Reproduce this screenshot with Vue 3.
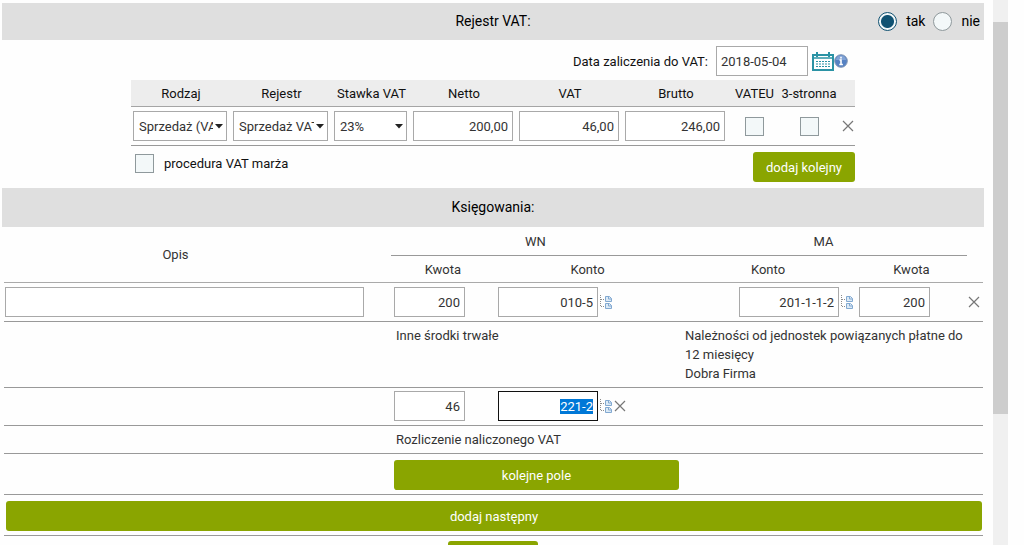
<script setup>
import { onMounted, ref } from 'vue'

const vatRegister = ref('tak')
const vatDate = ref('2018-05-04')
const kind = ref('Sprzedaż (VAT)')
const register = ref('Sprzedaż VAT')
const rate = ref('23%')
const amounts = ref([
  { label: 'Netto', value: '200,00' },
  { label: 'VAT', value: '46,00' },
  { label: 'Brutto', value: '246,00' },
])
const activeAccount = ref(null)

onMounted(() => {
  activeAccount.value.focus()
  activeAccount.value.select()
})
</script>

<template>
  <div class="page">
    <svg class="defs" aria-hidden="true">
      <symbol id="tree" viewBox="0 0 13 16">
        <path d="M1.500 1v12M2 5.500h4M2 12.500h4" fill="none" stroke="#8b8b8b" stroke-dasharray="1 1" />
        <g fill="#dceaf6" stroke="#82a9d1">
          <path d="M6.500 2.500h4l2 2v3h-6z" />
          <path d="M6.500 9.500h4l2 2v3h-6z" />
          <path d="M9.500 2.500v2.500h3M9.500 9.500v2.500h3" fill="none" />
        </g>
      </symbol>
      <symbol id="cross" viewBox="0 0 12 12">
        <path d="M1 1l10 10M11 1L1 11" fill="none" stroke="#777" stroke-width="1.200" />
      </symbol>
    </svg>

    <main class="content">
      <header class="bar bar-vat">
        <h2>Rejestr VAT:</h2>
        <div class="choice">
          <input id="vat-yes" v-model="vatRegister" type="radio" name="vat" value="tak" />
          <label for="vat-yes">tak</label>
          <input id="vat-no" v-model="vatRegister" type="radio" name="vat" value="nie" />
          <label for="vat-no">nie</label>
        </div>
      </header>

      <section class="vat">
        <div class="date-row">
          <label for="vat-date">Data zaliczenia do VAT:</label>
          <input id="vat-date" v-model="vatDate" class="field date" type="text" />
          <button class="icon" type="button" aria-label="Kalendarz">
            <svg width="22" height="20" viewBox="0 0 22 20">
              <rect x="1" y="4" width="20" height="15" fill="#fff" stroke="#2b93a5" stroke-width="2" />
              <path d="M1 7h20" stroke="#2b93a5" stroke-width="1.500" />
              <path d="M5 1v5M17 1v5" stroke="#2b93a5" stroke-width="2" />
              <path d="M4 10.500h14M4 13h14M4 15.500h14" stroke="#2b93a5" stroke-width="1.200" stroke-dasharray="2 1" />
            </svg>
          </button>
          <button class="icon info" type="button" aria-label="Informacja">
            <svg width="14" height="14" viewBox="0 0 14 14">
              <circle cx="7" cy="7" r="6.300" fill="#5682c3" stroke="#8397b5" />
              <path d="M2 6a5 4.500 0 0 1 10 0z" fill="#81a3d6" />
              <path d="M7 2.800v1.800M5.500 6H7v4.200M5.300 10.500h3.600" fill="none" stroke="#fff" stroke-width="1.600" />
            </svg>
          </button>
        </div>

        <table class="vat-table">
          <colgroup>
            <col class="c-kind" /><col class="c-reg" /><col class="c-rate" />
            <col /><col /><col />
            <col class="c-eu" /><col class="c-three" /><col class="c-del" />
          </colgroup>
          <thead>
            <tr>
              <th>Rodzaj</th><th>Rejestr</th><th>Stawka VAT</th>
              <th v-for="a in amounts" :key="a.label">{{ a.label }}</th>
              <th>VATEU</th><th>3-stronna</th><th></th>
            </tr>
          </thead>
          <tbody>
            <tr>
              <td>
                <select v-model="kind" class="field" aria-label="Rodzaj"><option>Sprzedaż (VAT)</option></select>
              </td>
              <td>
                <select v-model="register" class="field" aria-label="Rejestr"><option>Sprzedaż VAT</option></select>
              </td>
              <td>
                <select v-model="rate" class="field" aria-label="Stawka VAT"><option>23%</option></select>
              </td>
              <td v-for="a in amounts" :key="a.label">
                <input v-model="a.value" class="field num" type="text" :aria-label="a.label" />
              </td>
              <td class="mid"><input type="checkbox" aria-label="VATEU" /></td>
              <td class="mid"><input type="checkbox" aria-label="3-stronna" /></td>
              <td class="del">
                <button class="icon" type="button" aria-label="Usuń"><svg width="12" height="12"><use href="#cross" /></svg></button>
              </td>
            </tr>
          </tbody>
        </table>

        <div class="vat-foot">
          <div class="margin-opt">
            <input id="margin" type="checkbox" />
            <label for="margin">procedura VAT marża</label>
          </div>
          <button class="btn add" type="button">dodaj kolejny</button>
        </div>
      </section>

      <header class="bar bar-post">
        <h2>Księgowania:</h2>
      </header>

      <table class="post-table">
        <colgroup>
          <col /><col class="p-amt" /><col class="p-acc" /><col class="p-acc2" /><col class="p-amt2" /><col class="p-del" />
        </colgroup>
        <thead>
          <tr>
            <th rowspan="2" class="desc">Opis</th>
            <th colspan="2" class="group">WN</th>
            <th colspan="2" class="group">MA</th>
            <th rowspan="2"></th>
          </tr>
          <tr>
            <th>Kwota</th><th>Konto</th><th>Konto</th><th>Kwota</th>
          </tr>
        </thead>
        <tbody>
          <tr>
            <td class="desc-cell"><input class="field" type="text" aria-label="Opis" /></td>
            <td><input class="field num amount" type="text" value="200" aria-label="Kwota WN" /></td>
            <td>
              <div class="account">
                <input class="field num" type="text" value="010-5" aria-label="Konto WN" />
                <button class="icon" type="button" aria-label="Plan kont"><svg width="13" height="16"><use href="#tree" /></svg></button>
              </div>
            </td>
            <td>
              <div class="account end">
                <input class="field num" type="text" value="201-1-1-2" aria-label="Konto MA" />
                <button class="icon" type="button" aria-label="Plan kont"><svg width="13" height="16"><use href="#tree" /></svg></button>
              </div>
            </td>
            <td><input class="field num amount" type="text" value="200" aria-label="Kwota MA" /></td>
            <td class="del">
              <button class="icon" type="button" aria-label="Usuń"><svg width="12" height="12"><use href="#cross" /></svg></button>
            </td>
          </tr>
          <tr class="names">
            <td></td>
            <td colspan="2">Inne środki trwałe</td>
            <td colspan="2">Należności od jednostek powiązanych płatne do 12 miesięcy<br />Dobra Firma</td>
            <td></td>
          </tr>
          <tr class="extra">
            <td></td>
            <td><input class="field num amount" type="text" value="46" aria-label="Kwota WN" /></td>
            <td>
              <div class="account">
                <input ref="activeAccount" class="field num" type="text" value="221-2" aria-label="Konto WN" />
                <button class="icon" type="button" aria-label="Plan kont"><svg width="13" height="16"><use href="#tree" /></svg></button>
                <button class="icon remove" type="button" aria-label="Usuń"><svg width="12" height="12"><use href="#cross" /></svg></button>
              </div>
            </td>
            <td colspan="3"></td>
          </tr>
          <tr class="names">
            <td></td>
            <td colspan="2">Rozliczenie naliczonego VAT</td>
            <td colspan="3"></td>
          </tr>
          <tr class="action">
            <td></td>
            <td colspan="2"><button class="btn wide" type="button">kolejne pole</button></td>
            <td colspan="3"></td>
          </tr>
          <tr class="action full">
            <td colspan="6"><button class="btn wide" type="button">dodaj następny</button></td>
          </tr>
        </tbody>
      </table>

      <div class="footer"><button class="btn save" type="button"></button></div>
    </main>

    <div class="scroll" aria-hidden="true"><div class="thumb"></div></div>
  </div>
</template>

<style>
body {
  background: #fefefe;
}
</style>

<style scoped>
.page,
.page * {
  box-sizing: border-box;
}
.page {
  display: flex;
  height: 100vh;
  overflow: hidden;
  padding: 0 16px 0 2px;
  font: 13px/19px Roboto, sans-serif;
  color: #333;
}
.defs {
  position: absolute;
  width: 0;
  height: 0;
}
.content {
  flex: 1;
  min-width: 0;
  padding-top: 3px;
}
.scroll {
  width: 15px;
  margin-left: 9px;
  padding-top: 22px;
  background: #f0f0f0;
}
.thumb {
  height: 75%;
  background: #cdcdcd;
}
.bar {
  display: flex;
  align-items: center;
  justify-content: center;
  background: #dfdfdf;
  color: #000;
}
.bar-vat {
  position: relative;
  height: 37px;
}
.bar-post {
  height: 39px;
}
h2 {
  margin: 0;
  font-size: 14px;
  font-weight: 400;
}
.choice {
  position: absolute;
  right: 4px;
  top: 9px;
  display: flex;
  align-items: center;
  font-size: 14px;
}
.choice label {
  margin-left: 9px;
}
.choice label + input {
  margin-left: 8px;
}
input[type='radio'],
input[type='checkbox'] {
  appearance: none;
  flex: none;
  width: 19px;
  height: 19px;
  margin: 0;
  border: 1px solid #8f999c;
  background: #f3f8f9;
}
input[type='radio'] {
  border-radius: 50%;
}
input[type='radio']:checked {
  border-color: #105272;
  background: radial-gradient(circle, #105272 0 6px, #f3f8f9 7px);
}
input[type='checkbox'] {
  display: block;
}
.vat {
  height: 148px;
  padding: 6px 129px 0;
  color: #111;
}
.date-row {
  display: flex;
  align-items: center;
  justify-content: flex-end;
  margin-right: 7px;
}
.field {
  display: block;
  width: 100%;
  height: 30px;
  margin: 0;
  padding: 0 4px;
  border: 1px solid #a9a9a9;
  border-radius: 0;
  outline: none;
  background: #fff;
  color: #333;
  font: inherit;
}
.field.date {
  width: 92px;
  margin: 0 4px 0 8px;
}
.num {
  text-align: right;
}
select.field {
  appearance: none;
  padding: 0 13px 0 5px;
  background: #fff url("data:image/svg+xml,%3Csvg xmlns='http://www.w3.org/2000/svg' width='8' height='5'%3E%3Cpath d='M0 0h8L4 4.500z' fill='%23222'/%3E%3C/svg%3E") no-repeat right 3px center;
}
.icon {
  display: block;
  flex: none;
  padding: 0;
  border: 0;
  background: none;
}
.icon svg {
  display: block;
}
table {
  width: 100%;
  table-layout: fixed;
  border-collapse: separate;
  border-spacing: 0;
}
th {
  padding: 0;
  font-weight: 400;
  text-align: center;
  white-space: nowrap;
}
td {
  border-bottom: 1px solid #999;
}
.vat-table {
  margin-top: 4px;
}
.vat-table th {
  height: 27px;
  border-bottom: 1px solid #a5a5a5;
  background: #ededed;
}
.vat-table td {
  height: 39px;
  padding: 0 4px 0 2px;
}
.vat-table td.mid {
  padding: 0;
}
.vat-table td.mid input {
  margin: 0 auto;
}
.vat-table td.del {
  padding: 0 0 0 4px;
}
.c-kind { width: 100px; }
.c-reg { width: 101px; }
.c-rate { width: 79px; }
.c-eu { width: 51px; }
.c-three { width: 58px; }
.c-del { width: 17px; }
.vat-foot {
  display: flex;
  justify-content: space-between;
  align-items: flex-start;
  padding-top: 6px;
}
.margin-opt {
  display: flex;
  align-items: center;
  gap: 10px;
  padding: 2px 4px;
}
.btn {
  display: block;
  height: 30px;
  padding: 0 13px;
  border: 0;
  border-radius: 3px;
  background: #8aa500;
  color: #fff;
  font: inherit;
}
.btn.wide {
  width: 100%;
}
.post-table {
  width: calc(100% - 3px);
  margin-left: 2px;
}
.p-amt { width: 104px; }
.p-acc { width: 185px; }
.p-acc2 { width: 176px; }
.p-amt2 { width: 111px; }
.p-del { width: 16px; }
.post-table th {
  height: 27px;
  border-bottom: 1px solid #aaa;
}
.post-table th.group {
  height: 29px;
  border-color: #999;
}
.post-table th.desc {
  padding-right: 44px;
}
.post-table td {
  padding: 4px 3px;
}
.post-table .extra td {
  padding-top: 3px;
}
.post-table td.desc-cell {
  padding: 4px 27px 4px 1px;
}
.post-table td.del {
  padding: 0 0 0 1px;
}
.field.amount {
  width: 71px;
}
.account {
  display: flex;
  align-items: center;
  gap: 1px;
}
.account.end {
  justify-content: flex-end;
}
.account .field {
  width: 100px;
}
.account .field:focus {
  border-color: #111;
}
.account .field::selection {
  background: #0078d7;
  color: #fff;
}
.remove {
  margin-left: 1px;
}
.post-table .names td {
  padding: 4px 4px 4px 5px;
  vertical-align: top;
}
.post-table .action td {
  padding: 6px 1px 4px 3px;
}
.post-table .full td {
  padding: 6px 1px 4px 2px;
}
.footer {
  display: flex;
  justify-content: center;
  padding-top: 5px;
}
.save {
  width: 90px;
}
</style>
